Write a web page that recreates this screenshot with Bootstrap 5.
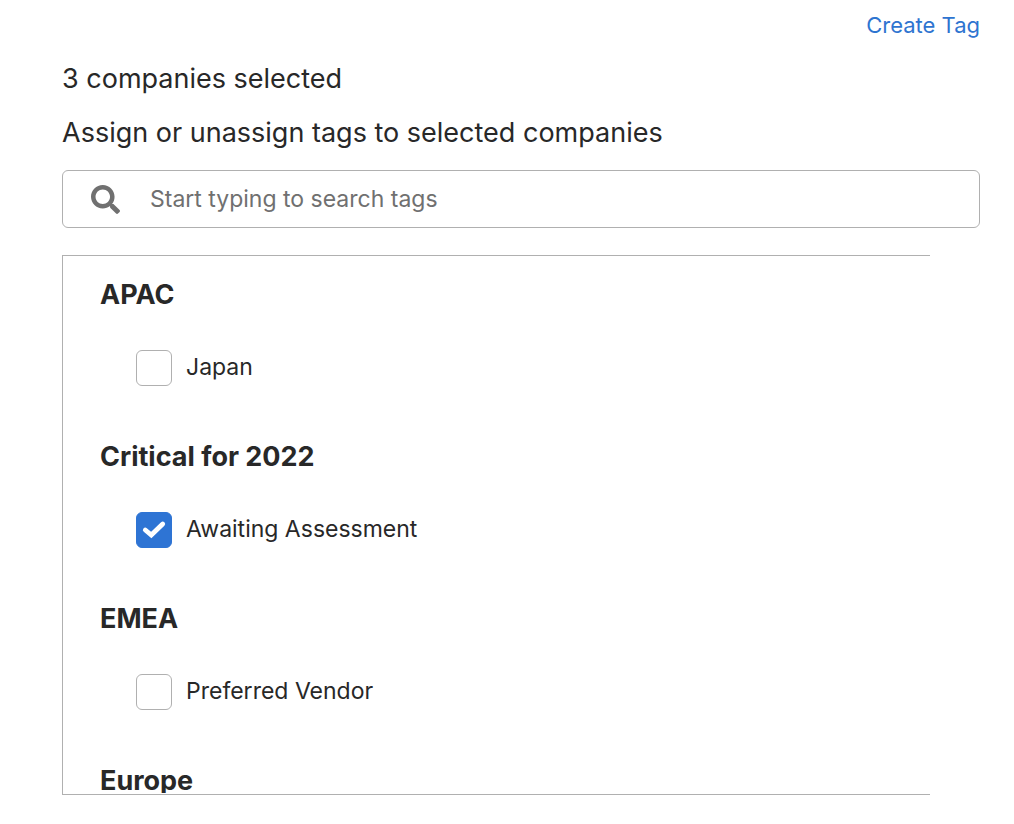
<!DOCTYPE html>
<html lang="en">
<head>
<meta charset="utf-8">
<meta name="viewport" content="width=device-width, initial-scale=1">
<title>Assign tags</title>
<link href="https://cdn.jsdelivr.net/npm/bootstrap@5.3.0/dist/css/bootstrap.min.css" rel="stylesheet">
<style>
body{font-family:"Inter","Noto Sans",sans-serif;color:#282828;background:#fff}
.tag-page{padding:8px 34px 28px 62px}
.tag-header{padding-bottom:10px}
.create-link{font-size:22px;line-height:34px;color:#2e74d0}
.headline{font-size:27px;line-height:54px}
.search-box{height:58px;border:1px solid #b0b0b0;border-radius:6px;margin-top:10px;padding:0 28px}
.search-box svg{width:29px;height:29px;color:#707070}
.search-box input{font-size:23px;padding:0 0 0 30px;color:#282828}
.search-box input::placeholder{color:#707070;opacity:1}
.search-box input:focus{box-shadow:none}
.tag-frame{margin:27px 50px 0 0;border:1px solid #b0b0b0;border-right:0;padding-bottom:1px}
.tag-list{height:537px;overflow-y:auto;scrollbar-width:none;padding:12px 37px}
.tag-list::-webkit-scrollbar{display:none}
.tag-list h2{font-size:27px;line-height:54px;font-weight:700;margin:0}
.tag-item{padding:28px 0 44px 36px;gap:14px}
.tag-item .form-check-input{width:36px;height:36px;border:1px solid #b0b0b0;border-radius:6px;margin:0;flex-shrink:0}
.tag-item .form-check-input:checked{background-color:#2e74d4;border-color:#2e74d4;background-size:36px 36px;background-image:url("data:image/svg+xml,%3csvg xmlns='http://www.w3.org/2000/svg' viewBox='0 0 36 36'%3e%3cpath d='M9.3 18l6 5L26.7 12' fill='none' stroke='%23fff' stroke-width='4.8' stroke-linecap='round'/%3e%3c/svg%3e")}
.tag-item label{font-size:23px;line-height:34px}
</style>
<script src="https://cdn.jsdelivr.net/npm/bootstrap@5.3.0/dist/js/bootstrap.bundle.min.js" defer></script>
</head>
<body>
<main class="tag-page">
<header class="tag-header text-end"><a href="#" class="create-link d-inline-block text-decoration-none">Create Tag</a></header>
<p class="headline m-0">3 companies selected</p>
<p class="headline m-0">Assign or unassign tags to selected companies</p>
<div class="search-box d-flex align-items-center">
<svg class="flex-shrink-0" viewBox="0 0 512 512" fill="currentColor" aria-hidden="true"><path d="M505 442.7L405.3 343c-4.5-4.5-10.6-7-17-7H372c27.6-35.3 44-79.7 44-128C416 93.1 322.9 0 208 0S0 93.1 0 208s93.1 208 208 208c48.3 0 92.7-16.4 128-44v16.3c0 6.4 2.5 12.5 7 17l99.7 99.7c9.4 9.4 24.6 9.4 33.9 0l28.3-28.3c9.4-9.4 9.4-24.6.1-34zM208 336c-70.7 0-128-57.2-128-128 0-70.7 57.2-128 128-128 70.7 0 128 57.2 128 128 0 70.7-57.2 128-128 128z"/></svg>
<input type="text" class="form-control border-0" aria-label="Search tags" placeholder="Start typing to search tags">
</div>
<section class="tag-frame" aria-label="Tags">
<div class="tag-list">
<h2>APAC</h2>
<div class="tag-item d-flex"><input class="form-check-input" type="checkbox" id="tag-japan"><label for="tag-japan">Japan</label></div>
<h2>Critical for 2022</h2>
<div class="tag-item d-flex"><input class="form-check-input" type="checkbox" id="tag-awaiting" checked><label for="tag-awaiting">Awaiting Assessment</label></div>
<h2>EMEA</h2>
<div class="tag-item d-flex"><input class="form-check-input" type="checkbox" id="tag-vendor"><label for="tag-vendor">Preferred Vendor</label></div>
<h2>Europe</h2>
</div>
</section>
</main>
</body>
</html>
